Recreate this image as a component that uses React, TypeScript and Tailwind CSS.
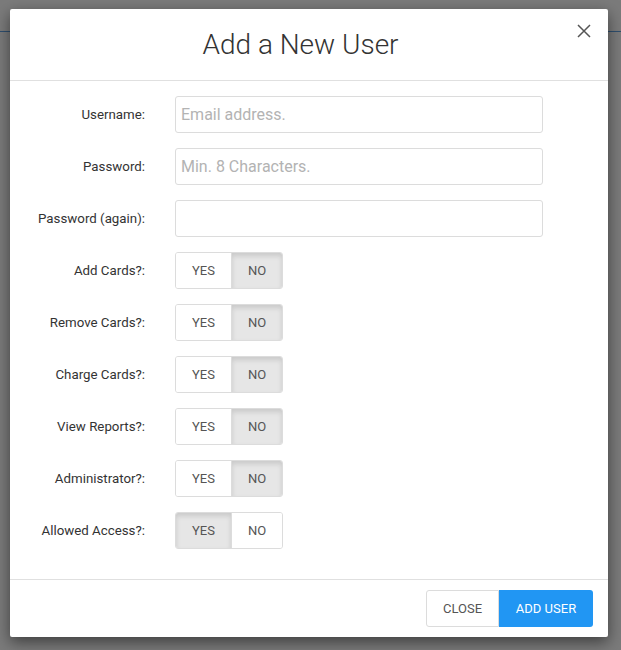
const rows = [
  { label: "Add Cards?:", yes: false },
  { label: "Remove Cards?:", yes: false },
  { label: "Charge Cards?:", yes: false },
  { label: "View Reports?:", yes: false },
  { label: "Administrator?:", yes: false },
  { label: "Allowed Access?:", yes: true },
];

const Toggle = ({ yes }: { yes: boolean }) => {
  const on = "bg-[#e6e6e6] shadow-[inset_0_3px_5px_rgba(0,0,0,0.125)]";
  return (
    <div className="flex h-[37px] w-[108px] rounded-[3px] border border-[#dcdcdc] text-[13px] text-[#555] overflow-hidden">
      <div className={`flex w-[56px] items-center justify-center border-r border-[#dcdcdc] ${yes ? on : "bg-white"}`}>YES</div>
      <div className={`flex flex-1 items-center justify-center ${yes ? "bg-white" : on}`}>NO</div>
    </div>
  );
};

const Field = ({ label, children }: { label: string; children: React.ReactNode }) => (
  <div className="flex items-center">
    <label className="w-[135px] text-right text-[13.3px] leading-[20px] text-[#333]">{label}</label>
    <div className="ml-[30px]">{children}</div>
  </div>
);

const Input = ({ placeholder }: { placeholder?: string }) => (
  <input
    placeholder={placeholder}
    className="h-[37px] w-[368px] rounded-[3px] border border-[#dcdcdc] bg-white px-[5px] text-[16px] text-[#333] outline-none placeholder:text-[#b3b3b3]"
  />
);

export default function App() {
  return (
    <div className="relative h-[650px] w-full overflow-hidden bg-[#7b7b7b] font-['Roboto',sans-serif]">
      <div className="h-[32px] border-b border-[#2f4f6f]" />
      <div className="absolute left-[10px] top-[9px] flex h-[628px] w-[598px] flex-col rounded-[2px] bg-white shadow-[0_5px_15px_rgba(0,0,0,0.5)]">
        <div className="relative flex h-[72px] items-center justify-center border-b border-[#e0e0e0] pr-[17px]">
          <h1 className="text-[28px] font-light text-[#333]">Add a New User</h1>
          <svg className="absolute right-[17px] top-[15px]" width="14" height="14" viewBox="0 0 14 14">
            <path d="M1 1L13 13M13 1L1 13" stroke="#555" strokeWidth="1.5" />
          </svg>
        </div>
        <div className="flex flex-1 flex-col gap-[15px] pt-[15px]">
          <Field label="Username:"><Input placeholder="Email address." /></Field>
          <Field label="Password:"><Input placeholder="Min. 8 Characters." /></Field>
          <Field label="Password (again):"><Input /></Field>
          {rows.map((r) => (
            <Field key={r.label} label={r.label}><Toggle yes={r.yes} /></Field>
          ))}
        </div>
        <div className="flex h-[58px] items-center justify-end border-t border-[#e0e0e0] pr-[15px]">
          <button className="h-[37px] w-[73px] rounded-l-[3px] border border-[#dcdcdc] bg-white text-[13px] text-[#555]">CLOSE</button>
          <button className="h-[37px] w-[94px] rounded-r-[3px] bg-[#2196f3] text-[13px] text-white">ADD USER</button>
        </div>
      </div>
    </div>
  );
}
